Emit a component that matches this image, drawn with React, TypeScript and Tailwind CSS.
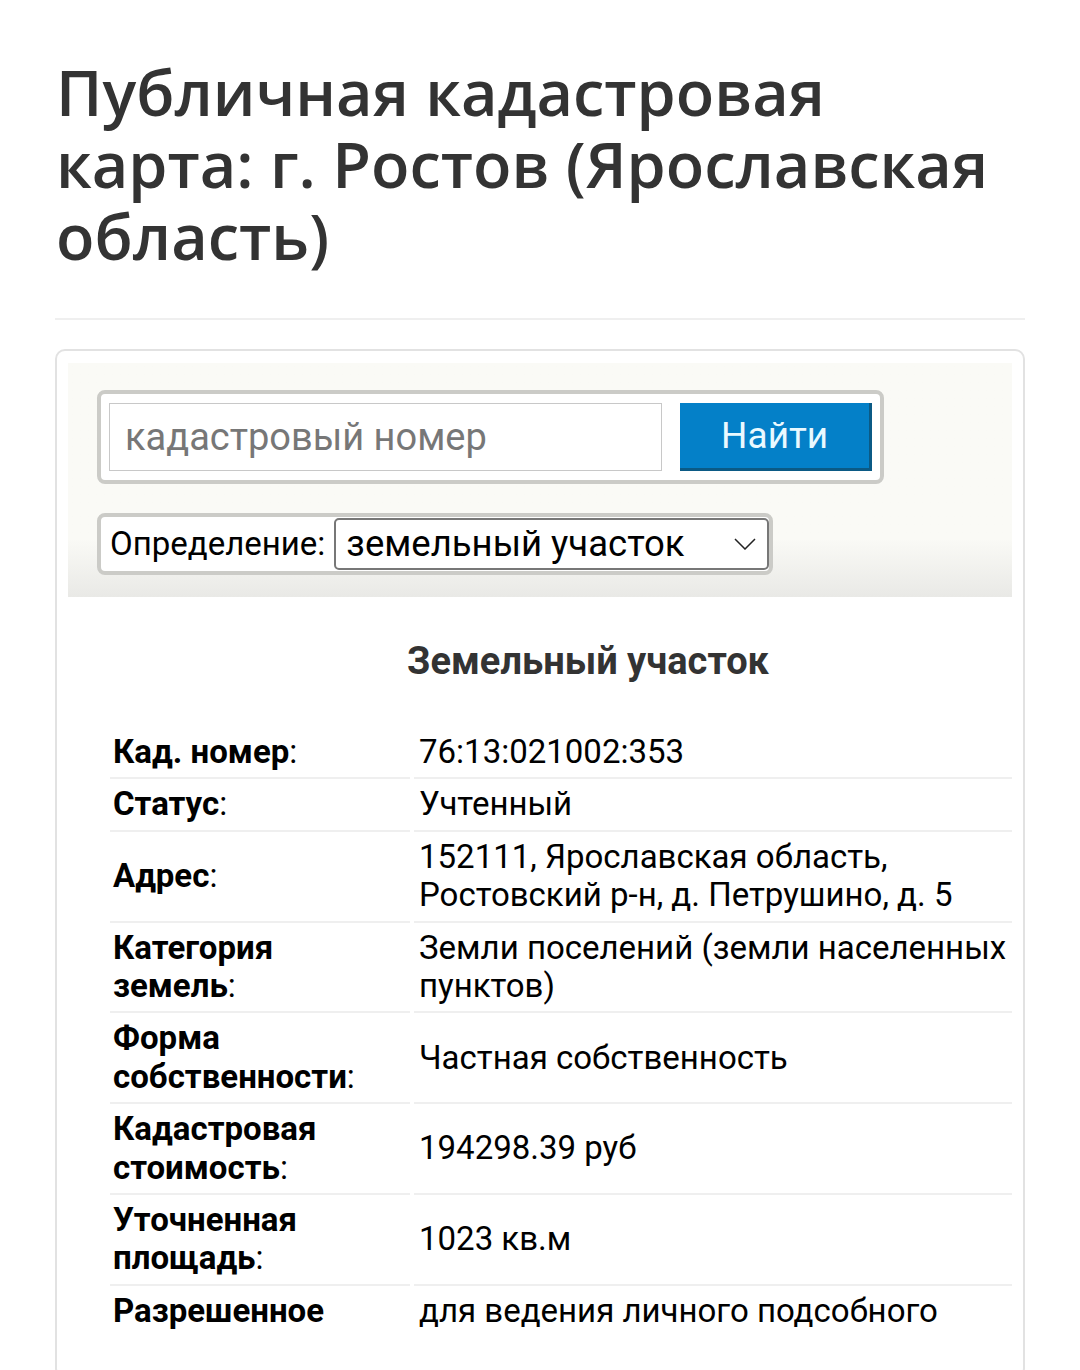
const rows: { label: string[]; value: string[] }[] = [
  { label: ['Кад. номер'], value: ['76:13:021002:353'] },
  { label: ['Статус'], value: ['Учтенный'] },
  { label: ['Адрес'], value: ['152111, Ярославская область,', 'Ростовский р-н, д. Петрушино, д. 5'] },
  { label: ['Категория', 'земель'], value: ['Земли поселений (земли населенных', 'пунктов)'] },
  { label: ['Форма', 'собственности'], value: ['Частная собственность'] },
  { label: ['Кадастровая', 'стоимость'], value: ['194298.39 руб'] },
  { label: ['Уточненная', 'площадь'], value: ['1023 кв.м'] },
]

export default function App() {
  return (
    <div className="w-[1080px] h-[1370px] overflow-hidden bg-white font-['Roboto',sans-serif] text-black">
      <div className="px-[55px] pt-[56px]">
        <h1 className="font-['Open_Sans',sans-serif] font-semibold text-[63px] leading-[72px] text-[#333] pl-[1px]">
          Публичная кадастровая карта: г. Ростов (Ярославская область)
        </h1>
        <div className="mt-[46px] h-[2px] bg-[#efefef]" />

        <div className="mt-[29px] border-2 border-[#e2e2e2] rounded-[10px] px-[11px] pt-[12px]">
          <div className="bg-gradient-to-b from-[#fafaf6] from-75% to-[#e9e9e6] px-[29px] pt-[27px] pb-[22px]">
            <div className="w-[787px] flex items-center gap-[18px] bg-white border-4 border-[#cbcbc7] rounded-[8px] px-[8px] py-[9px]">
              <div className="w-[554px] h-[68px] border border-[#c8c8c8] flex items-center px-[15px] text-[38px] text-[#777]">
                кадастровый номер
              </div>
              <div className="w-[192px] h-[68px] bg-[#0480c8] border-r-[3px] border-b-[3px] border-[#0b5a85] flex items-center justify-center text-[37px] text-[#eaf9ff]">
                Найти
              </div>
            </div>

            <div className="mt-[29px] w-[676px] h-[62px] flex items-center bg-white border-4 border-[#cbcbc7] rounded-[8px] pl-[9px]">
              <span className="text-[33px] mr-[9px]">Определение:</span>
              <div className="w-[438px] h-[52px] border-2 border-[#777] rounded-[5px] flex items-center justify-between pl-[10px] pr-[11px] text-[36.5px]">
                <span>земельный участок</span>
                <svg width="22" height="12" viewBox="0 0 22 12" fill="none" stroke="#222" strokeWidth="1.5">
                  <path d="M1 1l10 10 10-10" />
                </svg>
              </div>
            </div>
          </div>

          <div className="pt-[42px] pb-[40px] px-[30px]">
            <h2 className="text-center font-bold text-[38px] text-[#333] leading-[44px] pl-[96px]">Земельный участок</h2>
            <div className="mt-[44px] ml-[12px] -mr-[30px] text-[33px] leading-[38.4px]">
              {rows.map((r, i) => (
                <div key={i} className="flex gap-[4px]">
                  <div className="w-[300px] flex items-center py-[6px] border-b-2 border-[#efefef]">
                    <div className="pl-[3px]">
                      {r.label.map((l, j) => (
                        <div key={j} className="font-bold">
                          {l}
                          {j === r.label.length - 1 && <span className="font-normal">:</span>}
                        </div>
                      ))}
                    </div>
                  </div>
                  <div className="flex-1 flex items-center py-[6px] border-b-2 border-[#efefef]">
                    <div className="pl-[5px]">
                      {r.value.map((v, j) => (
                        <div key={j}>{v}</div>
                      ))}
                    </div>
                  </div>
                </div>
              ))}
              <div className="flex gap-[4px] py-[6px]">
                <div className="w-[300px] pl-[3px] font-bold">Разрешенное</div>
                <div className="flex-1 pl-[5px]">для ведения личного подсобного</div>
              </div>
            </div>
          </div>
        </div>
      </div>
    </div>
  )
}
